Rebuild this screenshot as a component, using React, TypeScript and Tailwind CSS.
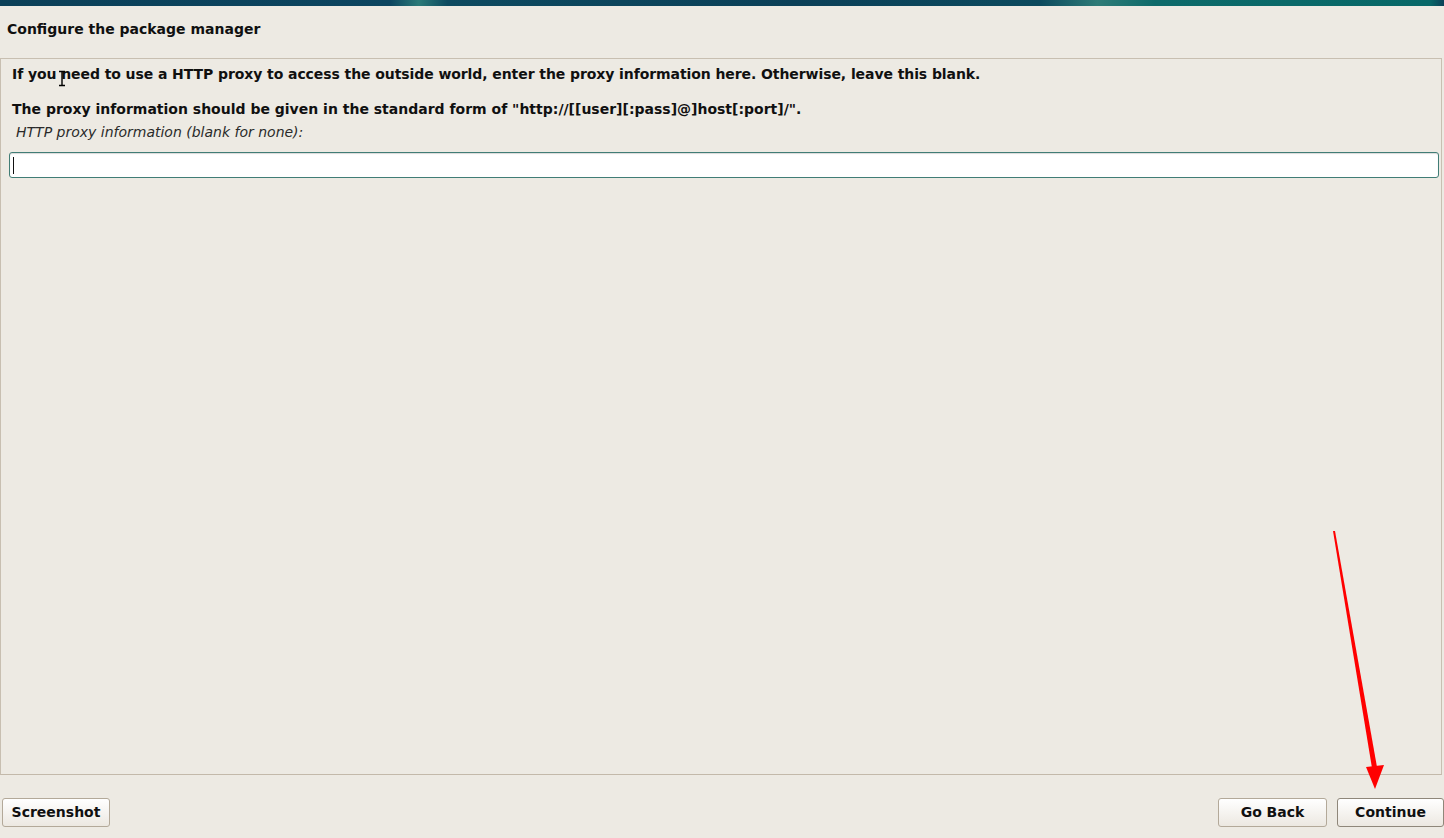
import { useState } from 'react';

export default function App() {
  const [proxy, setProxy] = useState('');

  return (
    <div className="relative w-[1444px] h-[838px] overflow-hidden bg-[#edeae3] flex flex-col font-['DejaVu_Sans',sans-serif] text-[#101010]">
      {/* Top banner strip */}
      <div className="h-[6px] shrink-0 bg-[linear-gradient(90deg,#0b4058_0%,#0c4560_27%,#2a7a78_29%,#0d4a60_31%,#0b4058_55%,#0c4a5e_72%,#2e7c78_76%,#0d6a6a_80%,#076868_99%,#0b4058_100%)]" />

      {/* Title */}
      <div className="h-[52px] shrink-0 flex items-center pl-[7px] pb-[5px]">
        <h1 className="text-[14px] font-bold">Configure the package manager</h1>
      </div>

      {/* Content panel */}
      <div className="flex-1 mr-[2px] border border-[#c8bfb1] border-b-[#c3b9aa] flex flex-col pl-[8px] pr-[2px] pt-[6px]">
        <p className="text-[14px] font-bold pl-[3px] leading-[19px] tracking-[-0.08px]">
          If you need to use a HTTP proxy to access the outside world, enter the proxy information here. Otherwise, leave this blank.
        </p>
        <p className="text-[14px] font-bold pl-[3px] leading-[19px] mt-[16px]">
          The proxy information should be given in the standard form of "http://[[user][:pass]@]host[:port]/".
        </p>
        <label className="text-[14px] italic text-[#2a2a2a] pl-[7px] leading-[19px] mt-[4px]">
          HTTP proxy information (blank for none):
        </label>
        <div className="relative mt-[10px]">
          <input
            value={proxy}
            onChange={(e) => setProxy(e.target.value)}
            className="h-[26px] w-full bg-white border-[1.5px] border-[#417d76] rounded-[3px] px-[4px] text-[14px] outline-none shadow-[inset_0_1px_1px_rgba(0,0,0,0.15)]"
          />
          {proxy === '' && <span className="absolute left-[4px] top-[5px] w-[1px] h-[17px] bg-[#111]" />}
        </div>
      </div>

      {/* Bottom buttons */}
      <div className="h-[63px] shrink-0 flex items-center pt-[12px] pl-[2px]">
        <button className="h-[29px] w-[108px] rounded-[3px] border border-[#b3a999] bg-[linear-gradient(#ffffff,#ece8e1)] text-[14px] font-bold">
          Screenshot
        </button>
        <div className="flex-1" />
        <button className="h-[29px] w-[109px] rounded-[3px] border border-[#b3a999] bg-[linear-gradient(#ffffff,#ece8e1)] text-[14px] font-bold">
          Go Back
        </button>
        <button className="ml-[10px] h-[29px] w-[107px] rounded-[3px] border border-[#8f877a] bg-[linear-gradient(#ffffff,#ece8e1)] text-[14px] font-bold">
          Continue
        </button>
      </div>

      {/* I-beam mouse cursor */}
      <svg className="absolute left-[58px] top-[70px]" width="8" height="17" viewBox="0 0 8 17">
        <path d="M1 1.5h6M4 1.5v14M1 15.5h6" stroke="#000" strokeWidth="1.4" fill="none" />
      </svg>

      {/* Red annotation arrow */}
      <svg className="absolute left-[1320px] top-[525px] pointer-events-none" width="80" height="270" viewBox="0 0 80 270">
        <polygon points="13,6 15,6 57,242 52,243" fill="#ff0000" />
        <polygon points="46,242 64,240 55,264" fill="#ff0000" />
      </svg>
    </div>
  );
}
